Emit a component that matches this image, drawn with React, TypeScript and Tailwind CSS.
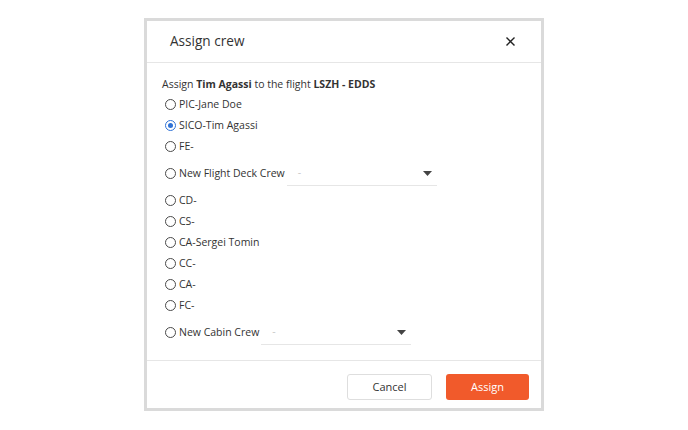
import React from "react";

const crew = [
  { label: "PIC-Jane Doe" },
  { label: "SICO-Tim Agassi", checked: true },
  { label: "FE-" },
  { label: "New Flight Deck Crew", select: true },
  { label: "CD-" },
  { label: "CS-" },
  { label: "CA-Sergei Tomin" },
  { label: "CC-" },
  { label: "CA-" },
  { label: "FC-" },
  { label: "New Cabin Crew", select: true },
];

function Radio({ checked }: { checked?: boolean }) {
  return checked ? (
    <span className="w-[11px] h-[11px] rounded-full border border-[#2f72d6] flex items-center justify-center shrink-0">
      <span className="w-[5px] h-[5px] rounded-full bg-[#2f72d6]" />
    </span>
  ) : (
    <span className="w-[11px] h-[11px] rounded-full border border-[#4a4a4a] shrink-0" />
  );
}

function Dropdown() {
  return (
    <div className="w-[150px] h-[24px] -ml-[1px] flex items-center justify-between border-b border-[#e6e6e6] pl-[11px] pr-[5px]">
      <span className="text-[#c8c8c8] text-[10.5px]">-</span>
      <svg width="9" height="5" viewBox="0 0 9 5">
        <path d="M0 0 L9 0 L4.5 5 Z" fill="#444" />
      </svg>
    </div>
  );
}

export default function App() {
  return (
    <div
      className="w-full h-screen bg-white flex justify-center pt-[18px] text-[#333]"
      style={{ fontFamily: '"Open Sans", sans-serif' }}>
      <div className="w-[400px] h-[393px] border-[3px] border-[#dadada] bg-white flex flex-col">
        <div className="h-[42px] flex items-center justify-between pl-[23px] pr-[26px] border-b border-[#e6e6e6]">
          <div className="text-[13.6px]">Assign crew</div>
          <svg width="9" height="9" viewBox="0 0 9 9">
            <path d="M0.5 0.5 L8.5 8.5 M8.5 0.5 L0.5 8.5" stroke="#222" strokeWidth="1.4" />
          </svg>
        </div>
        <div className="flex-1 px-[15px] pt-[13px] text-[10.5px]">
          <div className="leading-[16px]">
            Assign <b className="font-bold">Tim Agassi</b> to the flight{" "}
            <b className="font-bold">LSZH - EDDS</b>
          </div>
          <div className="mt-[2px] pl-[3px] flex flex-col">
            {crew.map((c, i) => (
              <div
                key={i}
                className={`flex items-center gap-[3px] ${c.select ? "h-[33px]" : "h-[21px]"}`}>
                <Radio checked={c.checked} />
                <span>{c.label}</span>
                {c.select && <Dropdown />}
              </div>
            ))}
          </div>
        </div>
        <div className="h-[48px] border-t border-[#e6e6e6] flex justify-end items-start pt-[13px] pr-[12px] gap-[14px] text-[11px]">
          <button className="w-[85px] h-[26px] rounded-[3px] border border-[#dedede] bg-white text-[#333]">
            Cancel
          </button>
          <button className="w-[83px] h-[26px] rounded-[3px] bg-[#f15a2b] text-white">
            Assign
          </button>
        </div>
      </div>
    </div>
  );
}
